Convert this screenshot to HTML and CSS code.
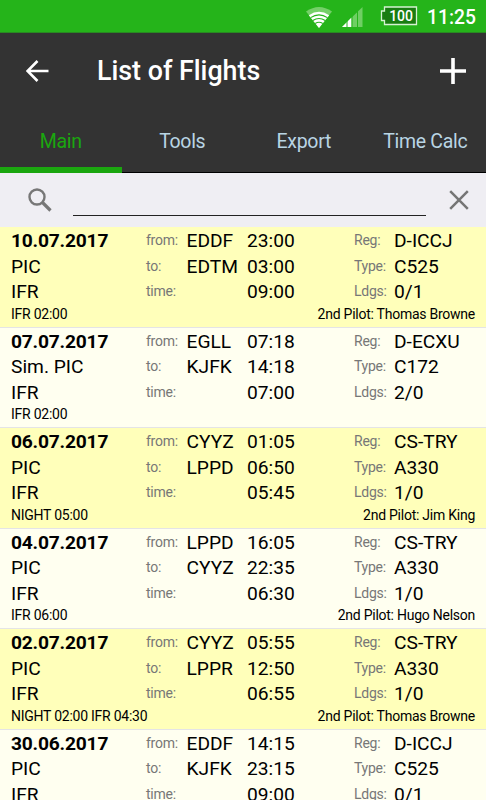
FILE: index.html
```html
<!DOCTYPE html>
<html>
<head>
    <meta charset="utf-8">
    <title>List of Flights</title>
    <link rel="stylesheet" href="styles.css">
</head>
<body>

    <div class="statusbar">
        <svg class="wifi" width="26" height="21" viewBox="0 0 26 21">
            <path d="M0 4.6Q13-4.6 26 4.6L13 21Z" fill="#74d068"/>
            <path d="M2.8 8.2Q13 1.4 23.2 8.2L13 21Z" fill="#fff"/>
            <path d="M4.6 10.6Q13 5.2 21.4 10.6M6.8 13.5Q13 9.6 19.2 13.5M9.2 16.4Q13 14.2 16.8 16.4" fill="none" stroke="#25b41a" stroke-width="1.1"/>
        </svg>
        <svg class="signal" width="21" height="20" viewBox="0 0 21 20">
            <path d="M0 20L20.5 0V20Z" fill="#6fcf63"/>
            <path d="M0 20L9.5 10.5V20Z" fill="#fff"/>
            <path d="M5 12V20M10 8V20M15.5 3V20" stroke="#25b41a" stroke-width="1"/>
        </svg>
        <div class="battery">
            <svg width="38" height="20" viewBox="0 0 38 20">
                <path d="M4.5 1H36.5V18.5H4.5V14.5H1.5V5H4.5Z" fill="#197d11" stroke="#d5f2d2" stroke-width="1.3"/>
            </svg>
            <span>100</span>
        </div>
        <span class="clock">11:25</span>
    </div>

    <div class="header">
        <svg class="back" width="23" height="22" viewBox="0 0 23 22">
            <path d="M11.5 1L1.5 11L11.5 21M1.5 11H22.5" fill="none" stroke="#fff" stroke-width="2.6"/>
        </svg>
        <h1>List of Flights</h1>
        <svg class="add" width="26" height="26" viewBox="0 0 26 26">
            <path d="M13 0V26M0 13H26" stroke="#fff" stroke-width="3.6"/>
        </svg>
    </div>

    <div class="tabs">
        <div class="tab active">Main</div>
        <div class="tab">Tools</div>
        <div class="tab">Export</div>
        <div class="tab">Time Calc</div>
    </div>

    <div class="search">
        <svg width="24" height="24" viewBox="0 0 24 24">
            <circle cx="9" cy="9" r="7.5" fill="none" stroke="#777" stroke-width="2.4"/>
            <path d="M14.5 14.5L22.5 22.5" stroke="#777" stroke-width="3.2"/>
        </svg>
        <input type="text" class="searchInput">
        <svg width="20" height="20" viewBox="0 0 20 20">
            <path d="M1.2 1.2L18.8 18.8M18.8 1.2L1.2 18.8" stroke="#757575" stroke-width="2.5"/>
        </svg>
    </div>

    <div class="flights">

        <div class="flight">
            <div class="grid">
                <b>10.07.2017</b><label>from:</label><span>EDDF</span><span>23:00</span><label>Reg:</label><span>D-ICCJ</span>
                <span>PIC</span><label>to:</label><span>EDTM</span><span>03:00</span><label>Type:</label><span>C525</span>
                <span>IFR</span><label>time:</label><span></span><span>09:00</span><label>Ldgs:</label><span>0/1</span>
            </div>
            <div class="note"><span>IFR 02:00</span><span>2nd Pilot: Thomas Browne</span></div>
        </div>

        <div class="flight">
            <div class="grid">
                <b>07.07.2017</b><label>from:</label><span>EGLL</span><span>07:18</span><label>Reg:</label><span>D-ECXU</span>
                <span>Sim. PIC</span><label>to:</label><span>KJFK</span><span>14:18</span><label>Type:</label><span>C172</span>
                <span>IFR</span><label>time:</label><span></span><span>07:00</span><label>Ldgs:</label><span>2/0</span>
            </div>
            <div class="note"><span>IFR 02:00</span></div>
        </div>

        <div class="flight">
            <div class="grid">
                <b>06.07.2017</b><label>from:</label><span>CYYZ</span><span>01:05</span><label>Reg:</label><span>CS-TRY</span>
                <span>PIC</span><label>to:</label><span>LPPD</span><span>06:50</span><label>Type:</label><span>A330</span>
                <span>IFR</span><label>time:</label><span></span><span>05:45</span><label>Ldgs:</label><span>1/0</span>
            </div>
            <div class="note"><span>NIGHT 05:00</span><span>2nd Pilot: Jim King</span></div>
        </div>

        <div class="flight">
            <div class="grid">
                <b>04.07.2017</b><label>from:</label><span>LPPD</span><span>16:05</span><label>Reg:</label><span>CS-TRY</span>
                <span>PIC</span><label>to:</label><span>CYYZ</span><span>22:35</span><label>Type:</label><span>A330</span>
                <span>IFR</span><label>time:</label><span></span><span>06:30</span><label>Ldgs:</label><span>1/0</span>
            </div>
            <div class="note"><span>IFR 06:00</span><span>2nd Pilot: Hugo Nelson</span></div>
        </div>

        <div class="flight">
            <div class="grid">
                <b>02.07.2017</b><label>from:</label><span>CYYZ</span><span>05:55</span><label>Reg:</label><span>CS-TRY</span>
                <span>PIC</span><label>to:</label><span>LPPR</span><span>12:50</span><label>Type:</label><span>A330</span>
                <span>IFR</span><label>time:</label><span></span><span>06:55</span><label>Ldgs:</label><span>1/0</span>
            </div>
            <div class="note"><span>NIGHT 02:00 IFR 04:30</span><span>2nd Pilot: Thomas Browne</span></div>
        </div>

        <div class="flight">
            <div class="grid">
                <b>30.06.2017</b><label>from:</label><span>EDDF</span><span>14:15</span><label>Reg:</label><span>D-ICCJ</span>
                <span>PIC</span><label>to:</label><span>KJFK</span><span>23:15</span><label>Type:</label><span>C525</span>
                <span>IFR</span><label>time:</label><span></span><span>09:00</span><label>Ldgs:</label><span>0/1</span>
            </div>
        </div>

    </div>

</body>
</html>
```
FILE: styles.css
```css
* {
    box-sizing: border-box;
}
body {
    margin: 0;
    height: 800px;
    overflow: hidden;
    display: flex;
    flex-direction: column;
    background: #fffff0;
    font-family: Roboto, sans-serif;
    color: #000;
}
.statusbar {
    height: 33px;
    flex: none;
    display: flex;
    justify-content: flex-end;
    align-items: flex-start;
    padding: 7px 10px 0 0;
    background: #25b41a;
    border-bottom: 1px solid #298a22;
    color: #fff;
}
.signal {
    margin-left: 10px;
}
.battery {
    display: grid;
    margin-left: 17px;
    margin-top: -1px;
}
.battery svg, .battery span {
    grid-area: 1 / 1;
}
.battery span {
    padding-left: 4px;
    font-size: 14px;
    font-weight: 500;
    line-height: 20px;
    text-align: center;
}
.clock {
    margin-left: 9px;
    font-size: 19.3px;
    font-weight: 500;
    line-height: 22px;
}
.header {
    height: 76px;
    flex: none;
    display: flex;
    align-items: center;
    padding: 0 20px 0 26px;
    background: #333;
}
.header h1 {
    flex: 1;
    margin: 0 0 0 48px;
    font-size: 26.8px;
    font-weight: 500;
    line-height: 30px;
    color: #fff;
}
.tabs {
    height: 64px;
    flex: none;
    display: grid;
    grid-template-columns: repeat(4, 1fr);
    grid-template-rows: 64px;
    background: #333;
}
.tab {
    height: 64px;
    border-bottom: 1px solid #000;
    font-size: 19.5px;
    letter-spacing: -0.3px;
    line-height: 66px;
    text-align: center;
    color: #b9d5e4;
}
.tab.active {
    border-bottom: 6px solid #1ba60f;
    color: #1ba60f;
}
.search {
    height: 54px;
    flex: none;
    display: flex;
    align-items: center;
    padding: 0 17px 0 28px;
    background: #efeef3;
}
.searchInput {
    flex: 1;
    height: 32px;
    margin: 0 23px 0 21px;
    padding: 0;
    border: 0;
    border-bottom: 1px solid #222;
    background: none;
    font: 19px Roboto, sans-serif;
}
.flight {
    height: 100.5px;
    padding: 1px 11px 0;
    border-bottom: 1px solid #e4e4e6;
    background: #fffff0;
}
.flight:nth-child(odd) {
    background: #ffffba;
}
.grid {
    display: grid;
    grid-template-columns: 135px 40.5px 60.5px 107px 40px 1fr;
    grid-auto-rows: 25.6px;
    font-size: 19.2px;
    line-height: 25.6px;
    white-space: nowrap;
}
.grid b {
    letter-spacing: -0.2px;
}
.grid label {
    font-size: 14px;
    letter-spacing: -0.25px;
    line-height: 24px;
    color: #777;
}
.note {
    display: flex;
    justify-content: space-between;
    font-size: 14px;
    letter-spacing: -0.25px;
    line-height: 18px;
}
```
